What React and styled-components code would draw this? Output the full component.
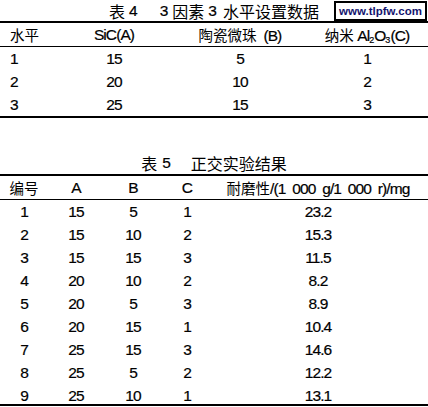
import React from 'react';
import styled, { createGlobalStyle } from 'styled-components';

const GlobalStyle = createGlobalStyle`
  html, body {
    margin: 0;
    padding: 0;
    background: #fff;
  }
  body {
    font-family: "Liberation Sans", Arial, "Noto Sans CJK SC", sans-serif;
    color: #000;
  }
`;

const Page = styled.div`
  position: relative;
  width: 428px;
  height: 407px;
  overflow: hidden;
  background: #fff;
`;

const Watermark = styled.div`
  position: absolute;
  top: 1px;
  right: 1px;
  width: 89px;
  height: 16px;
  border: 2px solid #000;
  background: #fff;
  display: flex;
  align-items: center;
  justify-content: center;
  font-family: "Liberation Sans", Arial, sans-serif;
  font-weight: bold;
  font-size: 11.5px;
  color: #14146e;
`;

const Caption = styled.div`
  height: ${(p) => p.$height}px;
  margin-top: ${(p) => p.$top || 0}px;
  display: flex;
  align-items: center;
  justify-content: center;
`;

const Word = styled.span`
  flex: none;
  margin-left: ${(p) => p.$gap || 0}px;
  font-family: ${(p) => (p.$han ? '"Noto Sans CJK SC", sans-serif' : '"Liberation Sans", Arial, sans-serif')};
  font-size: ${(p) => (p.$han ? 16 : 15.5)}px;
  -webkit-text-stroke: ${(p) => (p.$han ? '0' : '0.2px #000')};
`;

const Table = styled.div`
  border-top: 2px solid #000;
  border-bottom: 2px solid #000;
`;

const Row = styled.div`
  display: grid;
  grid-template-columns: ${(p) => p.$cols};
  height: ${(p) => (p.$last ? 17 : 23)}px;
  padding-top: ${(p) => (p.$last ? 3 : 0)}px;
  align-items: center;
  font-size: 15.5px;
  letter-spacing: -0.9px;
  -webkit-text-stroke: 0.2px #000;
  border-bottom: ${(p) => (p.$head ? '1px solid #000' : 'none')};
`;

const Cell = styled.div`
  text-align: ${(p) => (p.$left ? 'left' : 'center')};
  padding-left: ${(p) => (p.$left ? '10px' : '0')};
  white-space: pre;
`;

const Han = styled.span`
  font-family: "Noto Sans CJK SC", sans-serif;
  font-size: 14.5px;
  letter-spacing: 0;
  -webkit-text-stroke: 0;
`;

const Sub = styled.sub`
  font-size: 9px;
  vertical-align: -2px;
  letter-spacing: 0;
`;

const cols4 = '62px 104px 148px 106px';
const cols5 = '48px 56px 58px 50px 212px';

const levels = [
  ['1', '15', '5', '1'],
  ['2', '20', '10', '2'],
  ['3', '25', '15', '3'],
];

const results = [
  ['1', '15', '5', '1', '23.2'],
  ['2', '15', '10', '2', '15.3'],
  ['3', '15', '15', '3', '11.5'],
  ['4', '20', '10', '2', '8.2'],
  ['5', '20', '5', '3', '8.9'],
  ['6', '20', '15', '1', '10.4'],
  ['7', '25', '15', '3', '14.6'],
  ['8', '25', '5', '2', '12.2'],
  ['9', '25', '10', '1', '13.1'],
];

const App = () => (
  <Page>
    <GlobalStyle />
    <Watermark>www.tlpfw.com</Watermark>

    <Caption $height={21}>
      <Word $han>表</Word>
      <Word $gap={4}>4</Word>
      <Word $gap={22}>3</Word>
      <Word $han $gap={4}>因素</Word>
      <Word $gap={4}>3</Word>
      <Word $han $gap={6}>水平设置数据</Word>
    </Caption>
    <Table>
      <Row $cols={cols4} $head>
        <Cell $left><Han>水平</Han></Cell>
        <Cell>SiC(A)</Cell>
        <Cell><Han>陶瓷微珠</Han>  (B)</Cell>
        <Cell><Han>纳米</Han> Al<Sub>2</Sub>O<Sub>3</Sub>(C)</Cell>
      </Row>
      {levels.map((r) => (
        <Row key={r[0]} $cols={cols4}>
          <Cell $left>{r[0]}</Cell>
          <Cell>{r[1]}</Cell>
          <Cell>{r[2]}</Cell>
          <Cell>{r[3]}</Cell>
        </Row>
      ))}
    </Table>

    <Caption $height={22} $top={34}>
      <Word $han>表</Word>
      <Word $gap={5}>5</Word>
      <Word $han $gap={20}>正交实验结果</Word>
    </Caption>
    <Table>
      <Row $cols={cols5} $head>
        <Cell><Han>编号</Han></Cell>
        <Cell>A</Cell>
        <Cell>B</Cell>
        <Cell>C</Cell>
        <Cell><Han>耐磨性</Han>/(1  000  g/1  000  r)/mg</Cell>
      </Row>
      {results.map((r, idx) => (
        <Row key={r[0]} $cols={cols5} $last={idx === results.length - 1}>
          {r.map((v, i) => (
            <Cell key={i}>{v}</Cell>
          ))}
        </Row>
      ))}
    </Table>
  </Page>
);

export default App;
